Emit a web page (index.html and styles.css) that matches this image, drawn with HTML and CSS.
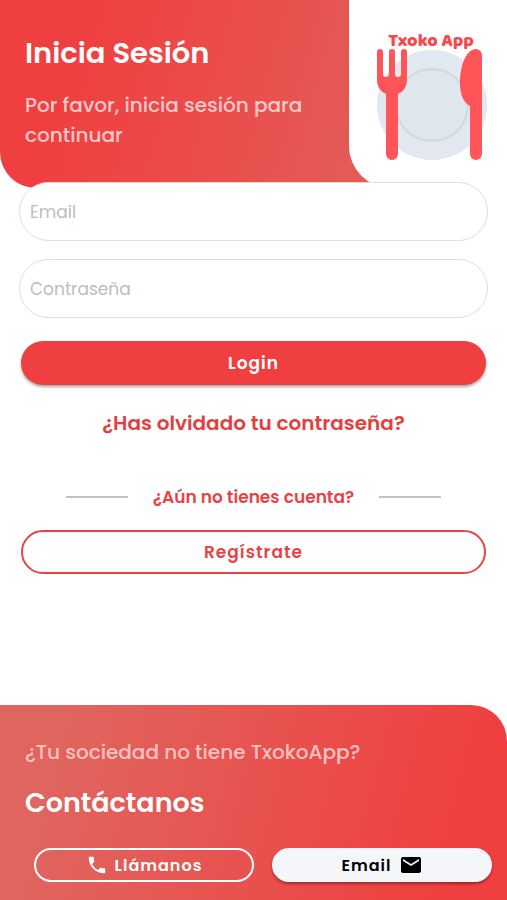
FILE: index.html
```html
<!DOCTYPE html>
<html lang="es">
<head>
    <meta charset="UTF-8">
    <meta name="viewport" content="width=device-width, initial-scale=1.0">
    <title>Txoko App - Inicia Sesión</title>
    <link rel="stylesheet" href="styles.css">
</head>
<body>
    <!-- Header -->
    <header class="header">
        <div class="header-text">
            <h1 class="title">Inicia Sesión</h1>
            <p class="subtitle">Por favor, inicia sesión para continuar</p>
        </div>
        <div class="logo-panel">
            <svg class="logo" viewBox="0 0 112 134" role="img" aria-label="Txoko App">
                <circle cx="56" cy="77" r="55" fill="#e1e8ef"/>
                <circle cx="56" cy="77" r="36" fill="#dfe6ee" stroke="#d1d9de" stroke-width="2"/>
                <g fill="#ff5558">
                    <!-- fork -->
                    <path d="M1 24a3 3 0 0 1 6 0v22a3 3 0 0 0 6 0V24a3 3 0 0 1 6 0v22a3 3 0 0 0 6 0V24a3 3 0 0 1 6 0v28c0 7-4 12-9 14v60a6 6 0 0 1-12 0V66c-5-2-9-7-9-14z"/>
                    <!-- knife -->
                    <path d="M100 21a6 6 0 0 1 6 6v99a6 6 0 0 1-12 0V78c-7-4-10-12-10-23 0-17 6-34 16-34z"/>
                </g>
                <text class="logo-text" x="55" y="18" text-anchor="middle">Txoko App</text>
            </svg>
        </div>
    </header>

    <!-- Login form -->
    <main class="content">
        <form class="login-form">
            <input class="field" type="email" name="email" placeholder="Email" aria-label="Email">
            <input class="field" type="password" name="password" placeholder="Contraseña" aria-label="Contraseña">
            <button class="btn btn-primary" type="submit">Login</button>
        </form>
        <a class="forgot" href="#">¿Has olvidado tu contraseña?</a>

        <div class="divider">
            <span class="line"></span>
            <p>¿Aún no tienes cuenta?</p>
            <span class="line"></span>
        </div>
        <button class="btn btn-outline" type="button">Regístrate</button>
    </main>

    <!-- Contact -->
    <footer class="footer">
        <p class="footer-question">¿Tu sociedad no tiene TxokoApp?</p>
        <h2 class="footer-title">Contáctanos</h2>
        <div class="contact">
            <button class="contact-btn call" type="button">
                <svg class="icon" viewBox="0 0 24 24"><path d="M6.6 10.8c1.4 2.8 3.8 5.1 6.6 6.6l2.2-2.2c.3-.3.7-.4 1-.2 1.1.4 2.3.6 3.6.6.6 0 1 .4 1 1V20c0 .6-.4 1-1 1C10.600 21 3 13.400 3 4c0-.6.4-1 1-1h3.500c.6 0 1 .4 1 1 0 1.200.2 2.400.6 3.600.1.300 0 .7-.2 1z"/></svg>
                Llámanos
            </button>
            <button class="contact-btn mail" type="button">
                Email
                <svg class="icon" viewBox="0 0 24 24"><path d="M20 4H4c-1.100 0-2 .9-2 2v12c0 1.100.9 2 2 2h16c1.100 0 2-.9 2-2V6c0-1.100-.9-2-2-2zm0 4-8 5-8-5V6l8 5 8-5z"/></svg>
            </button>
        </div>
    </footer>
</body>
</html>
```
FILE: styles.css
```css
* {
    margin: 0;
    padding: 0;
    box-sizing: border-box;
}

body {
    display: flex;
    flex-direction: column;
    min-height: 100vh;
    font-family: Poppins, Inter, sans-serif;
    background: #fff;
}

button,
input {
    font-family: inherit;
}

.header {
    display: flex;
    min-height: 188px;
    background: linear-gradient(105deg, #f03f40 15%, #df665f 95%);
    border-bottom-left-radius: 36px;
}

.header-text {
    flex: 1;
    padding: 32px 40px 0 25px;
}

.title {
    font-size: 29px;
    line-height: 42px;
    font-weight: 600;
    color: #fff;
}

.subtitle {
    margin-top: 16px;
    font-size: 20px;
    line-height: 30px;
    font-weight: 500;
    color: #ffc9c7;
}

.logo-panel {
    width: 158px;
    padding: 28px 19px 0 27px;
    background: #fff;
    border-bottom-left-radius: 42px;
}

.logo {
    display: block;
    width: 100%;
}

.logo-text {
    font-family: "Baloo 2", Inter, sans-serif;
    font-size: 18px;
    font-weight: 800;
    fill: #f9484b;
}

.content {
    display: flex;
    flex-direction: column;
    padding: 0 19px;
    margin-top: -6px;
}

.login-form {
    display: flex;
    flex-direction: column;
}

.field {
    height: 59px;
    margin-bottom: 18px;
    padding: 0 10px;
    border: 1px solid #dedede;
    border-radius: 30px;
    background: #fff;
    font-size: 17px;
    color: #333;
    outline: none;
}

.field::placeholder {
    color: #bdbdbd;
}

.btn {
    height: 44px;
    margin: 0 2px;
    border-radius: 22px;
    font-size: 17px;
    font-weight: 600;
    letter-spacing: 1px;
    cursor: pointer;
}

.btn-primary {
    margin-top: 5px;
    border: none;
    background: #f03f40;
    color: #fff;
    box-shadow: 0 2px 3px rgba(0, 0, 0, 0.35);
}

.btn-outline {
    border: 2px solid #e84344;
    background: #fff;
    color: #e84344;
}

.forgot {
    align-self: center;
    margin-top: 24px;
    font-size: 20px;
    line-height: 28px;
    font-weight: 600;
    color: #e53e3f;
    text-decoration: none;
}

.divider {
    display: flex;
    align-items: center;
    justify-content: center;
    gap: 25px;
    margin: 48px 0 21px;
    font-size: 17px;
    line-height: 24px;
    font-weight: 600;
    color: #e84344;
}

.line {
    width: 62px;
    height: 2px;
    background: #c4c4c4;
}

.footer {
    margin-top: auto;
    padding: 32px 15px 18px 25px;
    background: linear-gradient(285deg, #f03f40 10%, #df665f 90%);
    border-top-right-radius: 36px;
}

.footer-question {
    font-size: 20px;
    line-height: 30px;
    font-weight: 500;
    color: #ffc2c0;
}

.footer-title {
    margin-top: 16px;
    font-size: 27px;
    line-height: 40px;
    font-weight: 600;
    color: #fff;
}

.contact {
    display: flex;
    gap: 18px;
    margin-top: 25px;
    padding-left: 9px;
}

.contact-btn {
    display: flex;
    flex: 1;
    align-items: center;
    justify-content: center;
    gap: 7px;
    height: 34px;
    border: 2px solid #fff;
    border-radius: 17px;
    font-size: 16px;
    font-weight: 600;
    letter-spacing: 1px;
    cursor: pointer;
}

.call {
    background: transparent;
    color: #fff;
}

.mail {
    border-color: #f4f6fa;
    background: #f4f6fa;
    color: #000;
    box-shadow: 0 2px 3px rgba(0, 0, 0, 0.35);
}

.icon {
    width: 24px;
    height: 24px;
    fill: currentColor;
}

.call .icon {
    width: 22px;
    height: 22px;
}
```
